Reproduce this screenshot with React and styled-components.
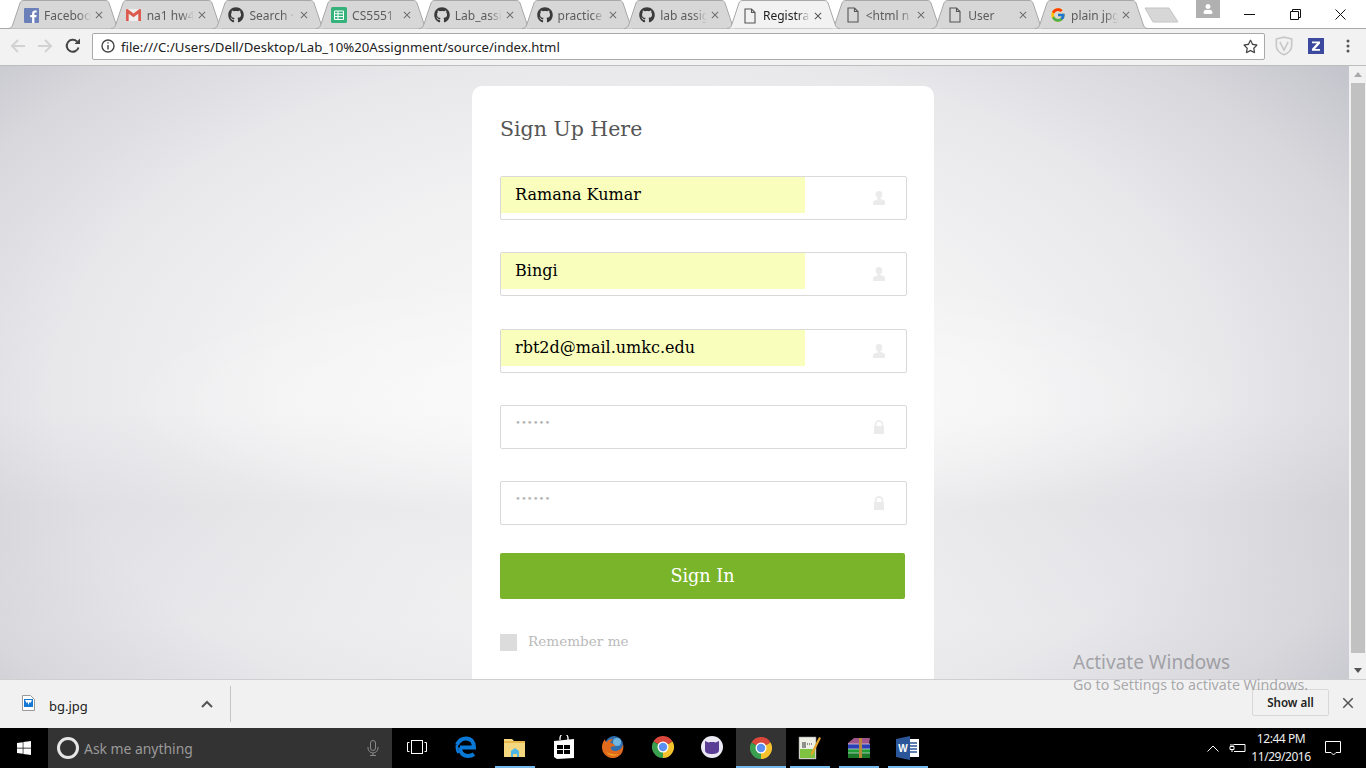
import React from "react";
import styled, { createGlobalStyle } from "styled-components";
import { FaGithub, FaUser, FaRegStar, FaWindows } from "react-icons/fa";
import { FcGoogle } from "react-icons/fc";
import { MdClose } from "react-icons/md";

const Global = createGlobalStyle`
  html, body { margin: 0; padding: 0; height: 100%; overflow: hidden; }
  #root { height: 100%; }
  * { box-sizing: border-box; }
`;
const SLAB = `"DejaVu Serif", "Liberation Serif", serif`;
const UI = `"Noto Sans", "Open Sans", sans-serif`;

const Page = styled.div`
  position: relative; width: 1366px; height: 768px; display: flex; flex-direction: column;
  overflow: hidden; font-family: ${UI}; background: #fff;
`;
const TabStrip = styled.div`
  position: relative; z-index: 2; height: 28px; flex: none; display: flex; padding-left: 7px; background: #fff;
`;
const TabRoot = styled.div`
  position: relative; z-index: ${p => (p.$active ? 3 : 1)}; flex: none; width: 114px; height: ${p => (p.$active ? 29 : 28)}px;
  margin-right: -11.3px; display: flex; align-items: center; padding: 2px 16px 0 16px; gap: 5px;
`;
const TabShape = styled.svg`
  position: absolute; left: 0; top: 0; width: 114px; height: 29px; z-index: -1;
`;
const TabIcon = styled.span`
  flex: none; width: 16px; height: 16px; display: flex; align-items: center; justify-content: center; color: #3a3a3a;
`;
const TabTitle = styled.span`
  flex: 1; min-width: 0; margin-right: -3px; font-size: 12px; white-space: nowrap; overflow: hidden; color: ${p => (p.$active ? "#222" : "#5c5c5c")};
  -webkit-mask-image: linear-gradient(90deg, #000 72%, transparent 100%);
  mask-image: linear-gradient(90deg, #000 72%, transparent 100%);
`;
const TabClose = styled.span`
  flex: none; width: 12px; display: flex; justify-content: center; color: ${p => (p.$active ? "#555" : "#6e6e6e")};
`;
const NewTab = styled.svg`
  flex: none; width: 36px; height: 20px; margin: 5px 0 0 7px;
`;
const WindowControls = styled.div`
  margin-left: auto; display: flex; align-items: flex-start; padding-right: 2.5px;
`;
const Profile = styled.div`
  width: 24px; height: 18px; background: #b0b0b0; display: flex; align-items: center; justify-content: center; color: #fff; margin-right: 7px;
`;
const WinBtn = styled.div`
  width: 45.5px; height: 28px; display: flex; align-items: center; justify-content: center;
`;
const Toolbar = styled.div`
  flex: none; height: 38px; background: #f2f2f2; border-top: 1px solid #a9a9a9; border-bottom: 1px solid #bdbdbd;
  display: flex; align-items: center; padding: 0 0 2px 4px;
`;
const NavBtn = styled.div`
  flex: none; width: 27.5px; height: 24px; display: flex; align-items: center; justify-content: center;
`;
const Omnibox = styled.div`
  flex: none; width: 1173px; height: 27px; margin: 0 3px 0 5.5px; background: #fff; border: 1px solid #a9a9a9; border-radius: 2px;
  display: flex; align-items: center; padding: 0 6px 0 8px; gap: 6px;
`;
const Url = styled.span`
  flex: 1; padding-top: 1px; font-size: 13.2px; color: #222; white-space: nowrap;
`;
const Ext = styled.div`
  flex: none; width: 32px; display: flex; justify-content: center; align-items: center;
`;
const Viewport = styled.div`
  flex: 1; min-height: 0; display: flex;
`;
const Main = styled.main`
  flex: 1; min-width: 0; overflow: hidden; padding: 20px 0 0 472px;
  background:
    radial-gradient(ellipse 560px 130px at 680px 335px, rgba(255,255,255,.7) 0%, rgba(255,255,255,0) 100%),
    linear-gradient(180deg, rgba(70,60,80,0) 345px, rgba(70,60,80,.05) 440px, rgba(70,60,80,0) 560px),
    radial-gradient(ellipse 900px 530px at 640px 330px, #f8f8f9 0%, #f2f2f3 40%, #e8e8eb 65%, #d7d7dc 85%, #c4c4cc 100%);
`;
const Card = styled.section`
  width: 462px; height: 640px; background: #fff; border-radius: 10px; padding: 28px 27px 0 28px;
`;
const Title = styled.h2`
  margin: 0 0 32px; height: 30px; font: 400 20.5px/30px ${SLAB}; color: #555;
`;
const Fields = styled.div`
  display: flex; flex-direction: column; gap: 32.25px;
`;
const Field = styled.div`
  position: relative; width: 407px; height: 44px; background: #fff; border: 1px solid #d9d9d9; border-radius: 2px;
`;
const FieldValue = styled.div`
  width: 304px; height: 36px; padding-left: 14px; background: ${p => (p.$filled ? "#fafebd" : "transparent")};
  font: 400 ${p => (p.$filled ? "16px" : "10px")}/${p => (p.$filled ? 35 : 34)}px ${SLAB}; color: ${p => (p.$filled ? "#000" : "#b4b4b4")};
`;
const FieldIcon = styled.svg`
  position: absolute; right: 21px; top: 14px; width: 12px; height: 14px; fill: #ebebeb;
`;
const Submit = styled.button`
  display: block; width: 405px; height: 46px; margin-top: 28px; border: 0; border-radius: 2px; background: #7ab42a; color: #fff;
  font: 400 17.6px/46px ${SLAB}; padding: 0;
`;
const Remember = styled.label`
  display: flex; align-items: center; gap: 11px; margin-top: 35px; color: #bbb; font: 400 13.6px/17px ${SLAB};
`;
const RememberText = styled.span`
  margin-top: -2px;
`;
const Check = styled.span`
  width: 17px; height: 17px; background: #dcdcdc;
`;
const Scrollbar = styled.div`
  flex: none; width: 17px; background: #f1f1f1; display: flex; flex-direction: column; align-items: center;
`;
const Arrow = styled.div`
  flex: none; height: 17px; width: 16px; display: flex; align-items: center; justify-content: center;
`;
const Thumb = styled.div`
  flex: none; width: 14px; height: 570px; background: #c1c1c1;
`;
const Track = styled.div`flex: 1;`;
const Shelf = styled.div`
  flex: none; height: 49px; background: #f1f1f1; border-top: 1px solid #cfcfcf; display: flex; align-items: center; padding-left: 22px;
`;
const ShelfIcon = styled.span`
  display: flex; margin-bottom: 2px;
`;
const ShelfName = styled.span`
  font-size: 13px; color: #222; margin: 3px 0 0 14px; width: 152px;
`;
const ShelfDivider = styled.div`
  width: 1px; height: 36px; background: #c4c4c4; margin: 0 0 0 17px;
`;
const ShowAll = styled.button`
  margin: 0 10px 3px auto; width: 77px; height: 27px; border: 1px solid #d8d8d8; border-radius: 2px; background: #f1f1f1;
  font: 600 11.6px ${UI}; color: #222; padding: 0;
`;
const ShelfClose = styled.span`
  margin: 0 9px 3px 0; display: flex; color: #555;
`;
const Taskbar = styled.footer`
  flex: none; height: 40px; background: #000; display: flex; align-items: stretch;
`;
const StartBtn = styled.div`
  flex: none; width: 48px; display: flex; align-items: center; justify-content: center; color: #fff;
`;
const SearchBox = styled.div`
  flex: none; width: 344px; background: #333; display: flex; align-items: center; padding: 0 13px 0 9px;
`;
const Cortana = styled.span`
  flex: none; width: 22px; height: 22px; border: 3px solid #e6e6e6; border-radius: 50%; margin: 0 5px 0 0;
`;
const SearchText = styled.span`
  flex: 1; color: #9a9a9a; font-size: 13.9px;
`;
const TaskSlot = styled.div`
  flex: none; width: 49.2px; display: flex; align-items: center; justify-content: center; color: #fff;
  background: ${p => (p.$active ? "#333" : "transparent")};
  border-bottom: 2px solid ${p => (p.$open ? "#76b9ed" : "transparent")};
  padding-top: ${p => (p.$open ? 2 : 0)}px;
  margin: 0 ${p => (p.$open && !p.$active ? 4.6 : 0)}px; 
  ${p => (p.$open && !p.$active ? "width: 40px;" : "")}
`;
const Tray = styled.div`
  margin-left: auto; display: flex; align-items: center; gap: 9.5px; color: #fff;
`;
const Clock = styled.div`
  width: 66px; margin-left: -7px; text-align: center; font-size: 12px; letter-spacing: -.45px; line-height: 18px; color: #eee;
`;
const Notify = styled.div`
  width: 38px; margin: 0 14px 0 -9.5px; display: flex; justify-content: center;
`;
const Watermark = styled.div`
  position: absolute; left: 1073px; top: 649px; color: rgba(120,120,125,.62); pointer-events: none;
`;
const WmTitle = styled.div`font-size: 19px; line-height: 26px;`;
const WmSub = styled.div`font-size: 14.2px; line-height: 20px;`;

const FileIcon = ({ size = 16 }) => (
  <svg width={size} height={size} viewBox="0 0 16 16" fill="none" stroke="#555" strokeWidth="1.1">
    <path d="M3 1h6.5L13 4.5V15H3zM9.5 1v3.5H13" />
  </svg>
);
const FbIcon = () => (
  <svg width="15" height="15" viewBox="0 0 15 15"><rect width="15" height="15" rx="1" fill="#6b80b8" /><path d="M10.4 15V9.2h1.9l.3-2.2h-2.2V5.6c0-.7.2-1.1 1.1-1.1h1.2V2.5c-.2 0-.9-.1-1.7-.1-1.7 0-2.9 1-2.9 3V7H6.2v2.2h1.9V15z" fill="#fff" /></svg>
);
const GmailIcon = () => (
  <svg width="15" height="12" viewBox="0 0 15 12"><path d="M0 1.5C0 .6.6 0 1.4 0h12.2c.8 0 1.4.6 1.4 1.500V12H0z" fill="#eee" /><path d="M0 12V1.200C0 .3 1.100-.3 1.900.3L7.500 4.600 13.100.3c.8-.6 1.900 0 1.900.9V12h-2.700V4.700L7.500 8.300 2.700 4.700V12z" fill="#dd5b4e" /></svg>
);
const SheetIcon = () => (
  <svg width="16" height="16" viewBox="0 0 16 16"><rect width="16" height="16" rx="1.500" fill="#35b27a" /><path d="M3.500 4h9v8.500h-9zM3.500 6.800h9M3.500 9.600h9M7 4v8.500" fill="none" stroke="#fff" strokeWidth="1" /></svg>
);
const ChromeIcon = ({ size = 22 }) => (
  <svg width={size} height={size} viewBox="0 0 24 24">
    <path d="M12 12L1.600 6A12 12 0 0 1 22.400 6Z" fill="#d9483b" />
    <path d="M12 12L22.400 6A12 12 0 0 1 12 24Z" fill="#f3c22d" />
    <path d="M12 12L12 24A12 12 0 0 1 1.600 6Z" fill="#3a9f4e" />
    <circle cx="12" cy="12" r="6" fill="#fff" /><circle cx="12" cy="12" r="4.600" fill="#5b8ff0" />
  </svg>
);
const EdgeIcon = () => (
  <svg width="22" height="22" viewBox="0 0 22 22" fill="none" stroke="#0a78d6" strokeWidth="4">
    <path d="M5 11.500h14c0-5.500-3-9-8-9-3.500 0-7 2-9 6" />
    <path d="M5 11.500c0 5 3 8.500 8 8.500 2.500 0 4.500-.7 6-1.800" />
    <path d="M2 8.500C1.500 12 2 15 3.500 17" strokeWidth="2.500" />
  </svg>
);
const ExplorerIcon = () => (
  <svg width="22" height="20" viewBox="0 0 22 20"><path d="M0 1h8l2 2h11v16H0z" fill="#f5d77f" /><path d="M0 3h21v2H0z" fill="#e8b94c" /><path d="M7 19v-6l4-3 4 3v6h-2v-3H9v3z" fill="#4fb7e8" /></svg>
);
const StoreIcon = () => (
  <svg width="22" height="24" viewBox="0 0 22 24"><path d="M1 6l20-2v19l-17 1-3-2z" fill="#fff" /><path d="M7 5V3a4 4 0 0 1 8 0v2" fill="none" stroke="#fff" strokeWidth="1.300" /><path d="M4 10h6v4H4zM11 10h6v4h-6zM4 15h6v4H4zM11 15h6v4h-6z" fill="#000" /></svg>
);
const FirefoxIcon = () => (
  <svg width="24" height="24" viewBox="0 0 24 24"><circle cx="13" cy="10" r="9" fill="#2f6fb0" /><circle cx="16" cy="7" r="4" fill="#6fb6e0" /><path d="M4 4c-3 4-4 8-2 13 3 6 11 8 16 4 4-3 5-8 4-12-1 5-4 7-8 7-3 0-5-2-4-4 1-1 3-1 4 0 0-3-3-4-5-4 1-2 2-3 3-4-3 0-5 1-6 3-1 0-2-1-2-3z" fill="#e0691c" /><path d="M5 17c3 4 9 5 13 2-4 1-9 0-13-2z" fill="#f5a623" /></svg>
);
const CatIcon = () => (
  <svg width="22" height="22" viewBox="0 0 22 22"><circle cx="11" cy="11" r="11" fill="#ece9f5" /><path d="M4 5l3.500 1.500c2-.6 5-.6 7 0L18 5v9c0 3-3 4-7 4s-7-1-7-4z" fill="#5c3d96" /></svg>
);
const NoteIcon = () => (
  <svg width="24" height="24" viewBox="0 0 24 24"><path d="M1 1h17v22H1z" fill="#eef0e6" stroke="#8a8a8a" strokeWidth=".6" /><path d="M2 13h15v9H2z" fill="#7fc241" /><path d="M5 6v6M7 6v6" stroke="#333" strokeWidth="1" /><path d="M9 8h5" stroke="#333" strokeWidth="1" strokeDasharray="1 1" /><path d="M13 17L21 1l2 1-8 16-2 2z" fill="#e3a52a" /></svg>
);
const RarIcon = () => (
  <svg width="24" height="22" viewBox="0 0 24 22"><path d="M1 6l6-5h16l-1 6H1z" fill="#a0558c" /><path d="M1 7h22v5H1z" fill="#2a3fb5" /><path d="M1 12h22v4H1z" fill="#1f9e3a" /><path d="M1 16h22v5H1z" fill="#1a7a2a" /><path d="M1 7h22M1 12h22M1 16h22" stroke="#ddd" strokeWidth=".7" /><path d="M12 1h3v20h-3z" fill="#b88a3a" /></svg>
);
const WordIcon = () => (
  <svg width="24" height="24" viewBox="0 0 24 24"><path d="M8 3h15v18H8z" fill="#fff" /><path d="M14 7h7M14 10h7M14 13h7M14 16h7" stroke="#2b579a" strokeWidth="1.300" /><path d="M0 3l14-3v24L0 21z" fill="#2b579a" /><text x="7" y="15.500" textAnchor="middle" fontSize="10" fontWeight="700" fill="#fff" fontFamily="Liberation Sans, sans-serif">W</text></svg>
);
const JpgIcon = () => (
  <svg width="13" height="16" viewBox="0 0 13 16"><path d="M.5.500h8L12.500 4.500v11H.500z" fill="#fff" stroke="#999" /><rect x="2" y="4" width="9" height="8" fill="#1678d2" /><path d="M3 5h7l-1.500 3-1-1-1 3-1-3-1 1z" fill="#fff" /></svg>
);
const PersonPath = () => <path d="M6 0a3.300 3.300 0 0 1 3.300 3.500c0 1.500-.8 3-1.800 3.500v1l3 1c1 .4 1.500 1 1.500 2V14H0v-2.500c0-1 .5-1.600 1.500-2l3-1V7c-1-.5-1.800-2-1.800-3.500A3.300 3.300 0 0 1 6 0z" />;
const LockPath = () => <path d="M1 6h.8V4.200a4.200 4.200 0 0 1 8.400 0V6h.8v8H1zM3.500 6h5V4.200a2.500 2.500 0 0 0-5 0z" fillRule="evenodd" />;

const tabs = [
  { t: "Facebook", i: <FbIcon /> },
  { t: "na1 hw4", i: <GmailIcon /> },
  { t: "Search ·", i: <FaGithub size={16} /> },
  { t: "CS5551", i: <SheetIcon /> },
  { t: "Lab_assi", i: <FaGithub size={16} /> },
  { t: "practice", i: <FaGithub size={16} /> },
  { t: "lab assig", i: <FaGithub size={16} /> },
  { t: "Registra", i: <FileIcon />, active: true },
  { t: "<html n", i: <FileIcon /> },
  { t: "User", i: <FileIcon /> },
  { t: "plain jpg", i: <FcGoogle size={16} /> },
];

const Tab = ({ t, i, active }) => (
  <TabRoot $active={active}>
    <TabShape viewBox="0 0 114 29">
      <path d="M1 28.500C4 28.500 5 27 6 24L13 3C14 1 15 .500 17 .500H98C100 .500 101 1 102 3L109 24C110 27 111 28.500 114 28.500" fill={active ? "#f2f2f2" : "#d7d7d7"} stroke="#a8a8a8" strokeWidth="1" />
    </TabShape>
    <TabIcon>{i}</TabIcon>
    <TabTitle $active={active}>{t}</TabTitle>
    <TabClose $active={active}><MdClose size={16} /></TabClose>
  </TabRoot>
);

const fields = [
  { v: "Ramana Kumar", filled: true, icon: <PersonPath /> },
  { v: "Bingi", filled: true, icon: <PersonPath /> },
  { v: "rbt2d@mail.umkc.edu", filled: true, icon: <PersonPath /> },
  { v: "••••••", icon: <LockPath /> },
  { v: "••••••", icon: <LockPath /> },
];

export default function App() {
  return (
    <Page>
      <Global />
      <TabStrip>
        {tabs.map((x, n) => <Tab key={n} {...x} />)}
        <NewTab viewBox="0 0 36 20"><path d="M1 3h24l9 14H9L1 3z" fill="#d7d7d7" stroke="#c4c4c4" strokeWidth="1" strokeLinejoin="round" /></NewTab>
        <WindowControls>
          <Profile><FaUser size={10} /></Profile>
          <WinBtn><svg width="11" height="11" viewBox="0 0 11 11"><path d="M0 5.500h11" stroke="#111" /></svg></WinBtn>
          <WinBtn><svg width="11" height="11" viewBox="0 0 11 11" fill="none" stroke="#111"><path d="M.5 2.500h8v8h-8zM2.500 2.500v-2h8v8h-2" /></svg></WinBtn>
          <WinBtn><svg width="11" height="11" viewBox="0 0 11 11" stroke="#111"><path d="M.5.500l10 10M10.500.500l-10 10" /></svg></WinBtn>
        </WindowControls>
      </TabStrip>
      <Toolbar>
        <NavBtn><svg width="16" height="14" viewBox="0 0 16 14" fill="none" stroke="#d2d2d2" strokeWidth="2"><path d="M15 7H2M8 1L2 7l6 6" /></svg></NavBtn>
        <NavBtn><svg width="16" height="14" viewBox="0 0 16 14" fill="none" stroke="#d2d2d2" strokeWidth="2"><path d="M1 7h13M8 1l6 6-6 6" /></svg></NavBtn>
        <NavBtn><svg width="16" height="16" viewBox="0 0 16 16" fill="none" stroke="#444" strokeWidth="2"><path d="M13.500 9.500A6 6 0 1 1 12 3.500" /><path d="M9.500 6H15V.500z" fill="#444" stroke="none" /></svg></NavBtn>
        <Omnibox>
          <svg width="14" height="14" viewBox="0 0 14 14" fill="none" stroke="#444" strokeWidth="1.400"><circle cx="7" cy="7" r="6" /><path d="M7 6v4.500M7 3.200v1.400" /></svg>
          <Url>file:///C:/Users/Dell/Desktop/Lab_10%20Assignment/source/index.html</Url>
          <FaRegStar size={15} color="#444" />
        </Omnibox>
        <Ext>
          <svg width="18" height="20" viewBox="0 0 15 17" fill="none" stroke="#c8c8c8" strokeWidth="1.400"><path d="M1 2.500l6.500-1.500 6.500 1.500v6c0 3-3 6-6.500 7.500C4 14.500 1 11.500 1 8.500z" /><path d="M4 5l3.500 7L11 5" /></svg>
        </Ext>
        <Ext>
          <svg width="16" height="16" viewBox="0 0 16 16"><rect width="16" height="16" fill="#3b4a9e" /><path d="M4 3.500h8v2L7 11h5v1.800H4v-2L9 5.300H4z" fill="#fff" /></svg>
        </Ext>
        <Ext>
          <svg width="4" height="14" viewBox="0 0 4 14" fill="#555"><circle cx="2" cy="2" r="1.500" /><circle cx="2" cy="7" r="1.500" /><circle cx="2" cy="12" r="1.500" /></svg>
        </Ext>
      </Toolbar>
      <Viewport>
        <Main>
          <Card>
            <Title>Sign Up Here</Title>
            <Fields>
              {fields.map((f, n) => (
                <Field key={n}>
                  <FieldValue $filled={f.filled}>{f.v}</FieldValue>
                  <FieldIcon viewBox="0 0 12 14">{f.icon}</FieldIcon>
                </Field>
              ))}
            </Fields>
            <Submit>Sign In</Submit>
            <Remember><Check /><RememberText>Remember me</RememberText></Remember>
          </Card>
        </Main>
        <Scrollbar>
          <Arrow><svg width="8" height="5" viewBox="0 0 8 5"><path d="M4 0l4 5H0z" fill="#aaa" /></svg></Arrow>
          <Thumb />
          <Track />
          <Arrow><svg width="8" height="5" viewBox="0 0 8 5"><path d="M0 0h8L4 5z" fill="#555" /></svg></Arrow>
        </Scrollbar>
      </Viewport>
      <Shelf>
        <ShelfIcon><JpgIcon /></ShelfIcon>
        <ShelfName>bg.jpg</ShelfName>
        <svg width="12" height="8" viewBox="0 0 12 8" fill="none" stroke="#555" strokeWidth="2"><path d="M1 7l5-5 5 5" /></svg>
        <ShelfDivider />
        <ShowAll>Show all</ShowAll>
        <ShelfClose><MdClose size={18} /></ShelfClose>
      </Shelf>
      <Taskbar>
        <StartBtn><FaWindows size={16} /></StartBtn>
        <SearchBox>
          <Cortana />
          <SearchText>Ask me anything</SearchText>
          <svg width="12" height="16" viewBox="0 0 12 16" fill="none" stroke="#8a8a8a" strokeWidth="1"><rect x="3.500" y=".500" width="5" height="10" rx="2.500" /><path d="M1 7v1a5 5 0 0 0 10 0V7M6 13v2.500M3 15.500h6" /></svg>
        </SearchBox>
        <TaskSlot><svg width="20" height="14" viewBox="0 0 20 14" fill="none" stroke="#fff" strokeWidth="1"><rect x="4.500" y=".500" width="11" height="13" /><path d="M2.500 2.500H.500v9h2M17.500 2.500h2v9h-2" /></svg></TaskSlot>
        <TaskSlot><EdgeIcon /></TaskSlot>
        <TaskSlot $open><ExplorerIcon /></TaskSlot>
        <TaskSlot><StoreIcon /></TaskSlot>
        <TaskSlot><FirefoxIcon /></TaskSlot>
        <TaskSlot><ChromeIcon /></TaskSlot>
        <TaskSlot><CatIcon /></TaskSlot>
        <TaskSlot $open $active><ChromeIcon /></TaskSlot>
        <TaskSlot $open><NoteIcon /></TaskSlot>
        <TaskSlot $open><RarIcon /></TaskSlot>
        <TaskSlot $open><WordIcon /></TaskSlot>
        <Tray>
          <svg width="12" height="7" viewBox="0 0 12 7" fill="none" stroke="#fff" strokeWidth="1"><path d="M.5 6.500L6 1l5.500 5.500" /></svg>
          <svg width="17" height="10" viewBox="0 0 17 10" fill="none" stroke="#fff" strokeWidth="1"><path d="M5 1.500h11v7H5M1 3.500h4v3H1zM2 1v2.500M4 1v2.500M3 6.500V9" /></svg>
          <Clock>12:44 PM<br />11/29/2016</Clock>
          <Notify><svg width="16" height="16" viewBox="0 0 16 16" fill="none" stroke="#fff" strokeWidth="1"><path d="M.5 1.500h15v11H11l-2.500 2.500L6 12.500H.5z" /></svg></Notify>
        </Tray>
      </Taskbar>
      <Watermark>
        <WmTitle>Activate Windows</WmTitle>
        <WmSub>Go to Settings to activate Windows.</WmSub>
      </Watermark>
    </Page>
  );
}
